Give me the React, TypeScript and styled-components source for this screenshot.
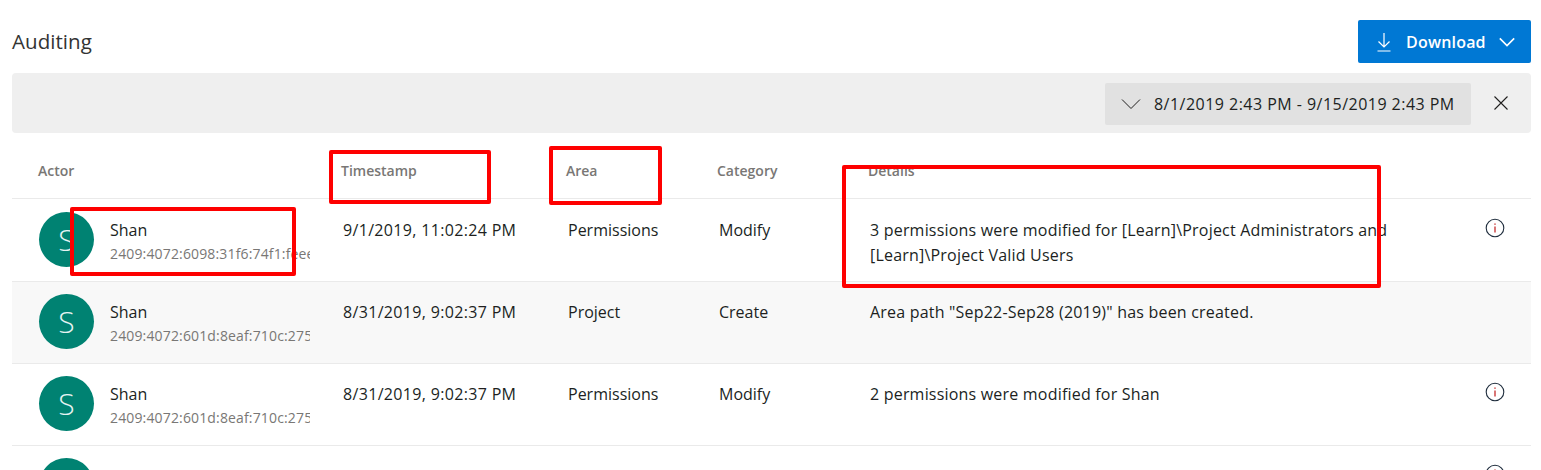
import React from "react";
import styled, { createGlobalStyle } from "styled-components";

const Global = createGlobalStyle`
  html, body { margin: 0; padding: 0; height: 100%; overflow: hidden; background: #fff; }
  body { font-family: "Open Sans", "Noto Sans", "Liberation Sans", sans-serif; color: #201f1e; }
  * { box-sizing: border-box; }
`;

const Page = styled.div`
  position: relative;
  width: 1541px;
  height: 470px;
  overflow: hidden;
  padding: 20px 10px 0 12px;
`;
const Header = styled.div`
  display: flex;
  justify-content: space-between;
  align-items: center;
  height: 43px;
`;
const Title = styled.h1`
  margin: 0 0 2px;
  font-size: 20.5px;
  font-weight: 400;
  color: #333;
  letter-spacing: 0.05px;
`;
const DownloadButton = styled.button`
  display: flex;
  align-items: center;
  width: 173px;
  height: 43px;
  padding: 0 0 0 19px;
  background: #0078d4;
  color: #fff;
  border: 0;
  border-radius: 2px;
  font: 600 16px "Open Sans", sans-serif;
  letter-spacing: 0.2px;
`;
const DownloadLabel = styled.span`
  margin: 0 13px 0 15px;
`;
const FilterBar = styled.div`
  display: flex;
  align-items: center;
  justify-content: flex-end;
  height: 60px;
  margin-top: 10px;
  padding: 2px 23px 0 0;
  background: #efefef;
  border-radius: 4px;
`;
const DateButton = styled.div`
  display: flex;
  align-items: center;
  gap: 13px;
  width: 366px;
  height: 42px;
  padding-left: 16px;
  background: #e1e1e1;
  border-radius: 2px;
  font-size: 16px;
  color: #201f1e;
  letter-spacing: 0.47px;
  white-space: nowrap;
`;
const CloseButton = styled.div`
  display: flex;
  margin: 0 0 2px 23px;
`;
const columns = "317px 225px 151px 151px 1fr";
const HeaderRow = styled.div`
  display: grid;
  grid-template-columns: ${columns};
  align-items: center;
  height: 66px;
  padding-top: 9px;
  border-bottom: 1px solid #eaeaea;
  font-size: 14px;
  font-weight: 600;
  color: #797775;
`;
const HeaderCell = styled.div<{ $first?: boolean }>`
  padding-left: ${(p) => (p.$first ? "26px" : "12px")};
`;
const Row = styled.div<{ $shaded?: boolean; $first?: boolean }>`
  display: grid;
  grid-template-columns: ${columns};
  height: ${(p) => (p.$first ? "83px" : "82px")};
  padding-top: ${(p) => (p.$first ? "1px" : "0")};
  border-bottom: 1px solid #eaeaea;
  background: ${(p) => (p.$shaded ? "#f8f8f8" : "#fff")};
  font-size: 16px;
  color: #201f1e;
`;
const ActorCell = styled.div`
  display: flex;
  align-items: center;
  padding: 0 0 2px 27px;
`;
const Avatar = styled.div`
  flex: none;
  display: flex;
  align-items: center;
  justify-content: center;
  width: 55px;
  height: 55px;
  border-radius: 50%;
  background: #008272;
  color: #e6f3f1;
  font-size: 30px;
  font-weight: 300;
`;
const ActorText = styled.div`
  width: 200px;
  margin-left: 16px;
  padding-top: 2px;
  overflow: hidden;
  white-space: nowrap;
`;
const ActorName = styled.div`
  line-height: 22px;
`;
const ActorIp = styled.div`
  margin-top: 4px;
  font-size: 14px;
  line-height: 18px;
  color: #797775;
  letter-spacing: 0.15px;
`;
const Cell = styled.div<{ $spacing?: number }>`
  padding: 18px 0 0 14px;
  line-height: 25px;
  letter-spacing: ${(p) => p.$spacing ?? 0}px;
`;
const DetailsCell = styled(Cell)`
  display: flex;
  justify-content: space-between;
  padding-right: 26px;
`;
const DetailsText = styled.div`
  width: 525px;
  letter-spacing: 0.2px;
`;
const InfoSlot = styled.div`
  display: flex;
`;
const Mark = styled.div<{ $x: number; $y: number; $w: number; $h: number }>`
  position: absolute;
  left: ${(p) => p.$x}px;
  top: ${(p) => p.$y}px;
  width: ${(p) => p.$w}px;
  height: ${(p) => p.$h}px;
  border: 4px solid #fe0000;
  border-radius: 2px;
`;

const Chevron = ({ size, weight = 1 }: { size: number; weight?: number }) => (
  <svg width={size} height={size} viewBox="0 0 20 20" fill="none" stroke="currentColor" strokeWidth={weight}>
    <path d="M1 5.5 10 14.5 19 5.5" />
  </svg>
);
const DownloadIcon = () => (
  <svg width="14" height="20" viewBox="0 0 14 20" fill="none" stroke="#fff" strokeWidth="1.2">
    <path d="M7 1V14.5M1.5 9.5 7 15 12.5 9.5M.5 19H13.5" />
  </svg>
);
const CloseIcon = () => (
  <svg width="14" height="14" viewBox="0 0 14 14" fill="none" stroke="#201f1e" strokeWidth="1.1">
    <path d="M.5.5 13.5 13.5M13.5.5 .5 13.5" />
  </svg>
);
const InfoIcon = () => (
  <svg width="20" height="20" viewBox="0 0 20 20" fill="none">
    <circle cx="10" cy="10" r="8.8" stroke="#1f2d3d" strokeWidth="1.1" />
    <path d="M10 8.6V14.6" stroke="#c01818" strokeWidth="1.2" />
    <path d="M10 5.4V6.8" stroke="#c01818" strokeWidth="1.3" />
  </svg>
);

type Audit = { ip: string; time: string; area: string; cat: string; details: string; info: boolean };
const audits: Audit[] = [
  { ip: "2409:4072:6098:31f6:74f1:feee:a1b2:9c10", time: "9/1/2019, 11:02:24 PM", area: "Permissions", cat: "Modify", details: "3 permissions were modified for [Learn]\\Project Administrators and [Learn]\\Project Valid Users", info: true },
  { ip: "2409:4072:601d:8eaf:710c:275b:33ce:91d4", time: "8/31/2019, 9:02:37 PM", area: "Project", cat: "Create", details: 'Area path "Sep22-Sep28 (2019)" has been created.', info: false },
  { ip: "2409:4072:601d:8eaf:710c:275b:33ce:91d4", time: "8/31/2019, 9:02:37 PM", area: "Permissions", cat: "Modify", details: "2 permissions were modified for Shan", info: true },
  { ip: "2409:4072:601d:8eaf:710c:275b:33ce:91d4", time: "8/31/2019, 9:02:37 PM", area: "Permissions", cat: "Modify", details: "2 permissions were modified for Shan", info: true },
];

export default function App() {
  return (
    <Page>
      <Global />
      <Header>
        <Title>Auditing</Title>
        <DownloadButton>
          <DownloadIcon />
          <DownloadLabel>Download</DownloadLabel>
          <Chevron size={16} weight={2} />
        </DownloadButton>
      </Header>
      <FilterBar>
        <DateButton>
          <Chevron size={20} />
          8/1/2019 2:43 PM - 9/15/2019 2:43 PM
        </DateButton>
        <CloseButton>
          <CloseIcon />
        </CloseButton>
      </FilterBar>
      <HeaderRow>
        <HeaderCell $first>Actor</HeaderCell>
        <HeaderCell>Timestamp</HeaderCell>
        <HeaderCell>Area</HeaderCell>
        <HeaderCell>Category</HeaderCell>
        <HeaderCell>Details</HeaderCell>
      </HeaderRow>
      {audits.map((a, i) => (
        <Row key={i} $shaded={i === 1} $first={i === 0}>
          <ActorCell>
            <Avatar>S</Avatar>
            <ActorText>
              <ActorName>Shan</ActorName>
              <ActorIp>{a.ip}</ActorIp>
            </ActorText>
          </ActorCell>
          <Cell $spacing={0.33}>{a.time}</Cell>
          <Cell>{a.area}</Cell>
          <Cell>{a.cat}</Cell>
          <DetailsCell>
            <DetailsText>{a.details}</DetailsText>
            {a.info && (
              <InfoSlot>
                <InfoIcon />
              </InfoSlot>
            )}
          </DetailsCell>
        </Row>
      ))}
      <Mark $x={70} $y={207} $w={226} $h={69} />
      <Mark $x={329} $y={150} $w={162} $h={54} />
      <Mark $x={549} $y={146} $w={113} $h={59} />
      <Mark $x={842} $y={165} $w={539} $h={123} />
    </Page>
  );
}
